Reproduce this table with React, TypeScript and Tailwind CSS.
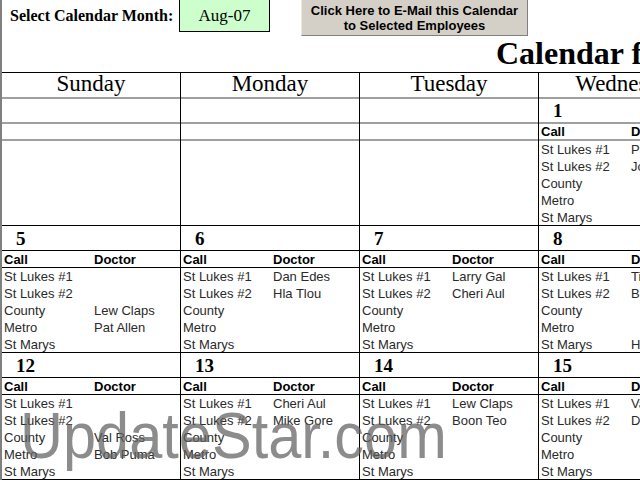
import React from "react";

const serif = { fontFamily: '"Liberation Serif", "Times New Roman", serif' };
const sans = { fontFamily: '"Liberation Sans", Arial, sans-serif' };

const calls = ["St Lukes #1", "St Lukes #2", "County", "Metro", "St Marys"];
const dayNames = ["Sunday", "Monday", "Tuesday", "Wednesday", "Thursday", "Friday", "Saturday"];

type Day = { n?: number; docs?: string[] };

const weeks: Day[][] = [
  [
    {},
    {},
    {},
    { n: 1, docs: ["Pat Allen", "Jon Beck", "", "", ""] },
    { n: 2, docs: ["Lew Claps", "Dan Edes", "", "", ""] },
    { n: 3, docs: ["Hla Tlou", "Boon Teo", "", "", ""] },
    { n: 4, docs: ["", "", "Val Ross", "Mike Gore", ""] },
  ],
  [
    { n: 5, docs: ["", "", "Lew Claps", "Pat Allen", ""] },
    { n: 6, docs: ["Dan Edes", "Hla Tlou", "", "", ""] },
    { n: 7, docs: ["Larry Gal", "Cheri Aul", "", "", ""] },
    { n: 8, docs: ["Tim Hart", "Bob Puma", "", "", "Hla Tlou"] },
    { n: 9, docs: ["Val Ross", "Boon Teo", "", "", ""] },
    { n: 10, docs: ["Mike Gore", "Larry Gal", "", "", ""] },
    { n: 11, docs: ["", "", "Cheri Aul", "Dan Edes", ""] },
  ],
  [
    { n: 12, docs: ["", "", "Val Ross", "Bob Puma", ""] },
    { n: 13, docs: ["Cheri Aul", "Mike Gore", "", "", ""] },
    { n: 14, docs: ["Lew Claps", "Boon Teo", "", "", ""] },
    { n: 15, docs: ["Val Ross", "Dan Edes", "", "", ""] },
    { n: 16, docs: ["Pat Allen", "Tim Hart", "", "", ""] },
    { n: 17, docs: ["Hla Tlou", "Larry Gal", "", "", ""] },
    { n: 18, docs: ["", "", "Bob Puma", "Jon Beck", ""] },
  ],
];

function Cell({ day, first }: { day: Day; first: boolean }) {
  const line = first ? "border-b-2 border-[#a0a0a0]" : "border-b border-black";
  return (
    <div className="w-[179px] shrink-0 border-r border-black flex flex-col">
      <div className={`h-[25px] flex items-center pl-[14px] ${line}`}>
        {day.n && (
          <span className="text-[19px] font-bold leading-none text-black" style={serif}>
            {day.n}
          </span>
        )}
      </div>
      <div
        className={`h-[17px] grid grid-cols-[90px_1fr] items-center pl-[2px] text-[13px] font-bold leading-none text-black ${line}`}
        style={sans}
      >
        {day.n && (
          <>
            <span>Call</span>
            <span>Doctor</span>
          </>
        )}
      </div>
      <div className="h-[85px] border-b border-black pl-[2px] text-[13px] leading-[17px] text-[#2a2a2a]" style={sans}>
        {day.n &&
          calls.map((c, i) => (
            <div key={c} className="grid grid-cols-[90px_1fr] h-[17px] whitespace-nowrap">
              <span>{c}</span>
              <span>{day.docs?.[i]}</span>
            </div>
          ))}
      </div>
    </div>
  );
}

export default function App() {
  return (
    <div className="relative w-[640px] h-[480px] overflow-hidden bg-white">
      <div className="w-max border-l-2 border-[#808080]">
        {/* top bar */}
        <div className="h-[72px] flex flex-col">
          <div className="h-[36px] flex items-start">
            <div className="w-[177px] h-[32px] flex items-center pl-[8px]">
              <span className="text-[16px] font-bold text-black whitespace-nowrap" style={serif}>
                Select Calendar Month:
              </span>
            </div>
            <div className="w-[91px] h-[32px] bg-[#ccffcc] border-x border-b border-black flex items-center justify-center">
              <span className="text-[17px] text-black" style={serif}>
                Aug-07
              </span>
            </div>
            <div className="w-[31px]" />
            <button
              className="w-[227px] h-[36px] bg-[#d4d0c8] border-l border-l-[#e8e6e0] border-r border-b border-[#808080] flex flex-col items-center justify-center text-[13px] font-bold leading-[15px] text-black"
              style={sans}
            >
              <span>Click Here to E-Mail this Calendar</span>
              <span>to Selected Employees</span>
            </button>
          </div>
          <div className="h-[36px] pl-[494px] text-[32px] font-bold leading-[34px] text-black whitespace-nowrap" style={serif}>
            Calendar for August 2007
          </div>
        </div>

        {/* day headers */}
        <div className="flex border-t border-black">
          {dayNames.map((d) => (
            <div key={d} className="w-[179px] shrink-0 border-r border-black">
              <div
                className="h-[26px] pb-[3px] border-b-2 border-[#a0a0a0] flex items-center justify-center text-[23px] leading-none text-black"
                style={serif}
              >
                {d}
              </div>
            </div>
          ))}
        </div>

        {weeks.map((w, wi) => (
          <div key={wi} className="flex">
            {w.map((d, di) => (
              <Cell key={di} day={d} first={wi === 0} />
            ))}
          </div>
        ))}
      </div>

      <span
        className="absolute left-[20px] top-[404px] text-[64px] leading-none text-[rgba(95,95,95,0.72)] whitespace-nowrap scale-x-[0.93] origin-left pointer-events-none"
        style={sans}
      >
        UpdateStar.com
      </span>
    </div>
  );
}
